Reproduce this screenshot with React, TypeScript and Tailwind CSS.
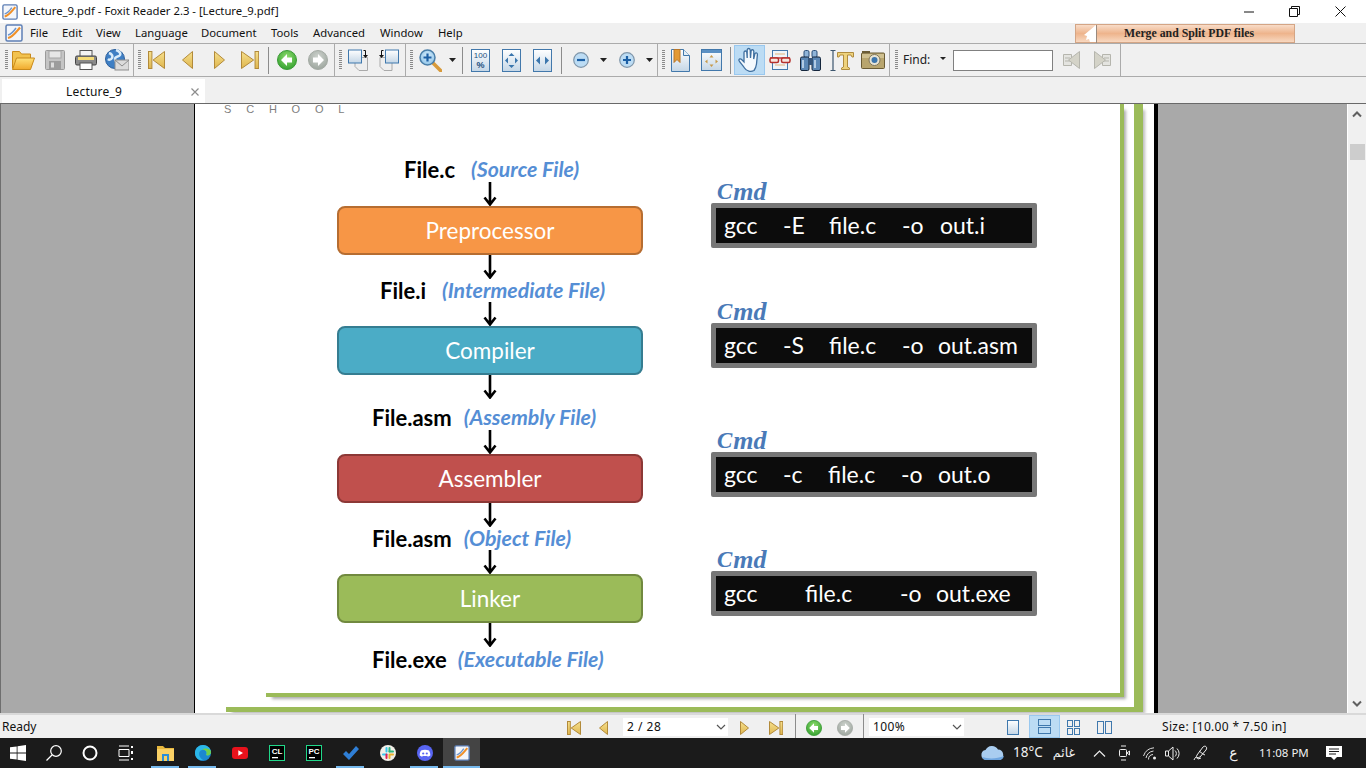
import React from "react";

const S = ({ w, h, c = "", children }: { w: number; h: number; c?: string; children?: React.ReactNode }) => (
  <svg width={w} height={h} viewBox={`0 0 ${w} ${h}`} className={`shrink-0 ${c}`}>{children}</svg>
);

const Defs = () => (
  <svg width="0" height="0" className="absolute">
    <defs>
      <linearGradient id="gold" x1="0" y1="0" x2="0" y2="1"><stop offset="0" stopColor="#f6e08e" /><stop offset="1" stopColor="#dfb64e" /></linearGradient>
      <linearGradient id="folder" x1="0" y1="0" x2="0" y2="1"><stop offset="0" stopColor="#ffe27a" /><stop offset="1" stopColor="#f0a92c" /></linearGradient>
      <linearGradient id="blueb" x1="0" y1="0" x2="0" y2="1"><stop offset="0" stopColor="#ffffff" /><stop offset="1" stopColor="#c4d6e6" /></linearGradient>
      <radialGradient id="green" cx="0.5" cy="0.35" r="0.7"><stop offset="0" stopColor="#8fdc6e" /><stop offset="1" stopColor="#2f9e2c" /></radialGradient>
      <radialGradient id="gray" cx="0.5" cy="0.35" r="0.7"><stop offset="0" stopColor="#cfd4cf" /><stop offset="1" stopColor="#9aa39b" /></radialGradient>
      <radialGradient id="lens" cx="0.5" cy="0.4" r="0.6"><stop offset="0" stopColor="#d8eefc" /><stop offset="1" stopColor="#8fc4e8" /></radialGradient>
    </defs>
  </svg>
);

const Grip = ({ c = "" }: { c?: string }) => (
  <div className={`w-[3px] h-[20px] shrink-0 bg-[repeating-linear-gradient(#8a8a8a_0_1px,transparent_1px_2px)] ${c}`} />
);
const Sep = ({ c = "" }: { c?: string }) => <div className={`w-px self-stretch shrink-0 bg-[#ababab] ${c}`} />;
const Thin = ({ c = "" }: { c?: string }) => <div className={`w-px h-[27px] shrink-0 bg-[#8c8c8c] ${c}`} />;
const Drop = ({ c = "" }: { c?: string }) => (
  <S w={7} h={4} c={c}><polygon points="0,0 7,0 3.5,4" fill="#222" /></S>
);

const Folder = ({ c = "" }: { c?: string }) => (
  <S w={23} h={20} c={c}>
    <path d="M0.500 18.500V1.500h7l2 2.500h9v4" fill="#f2c24e" stroke="#c98a1a" />
    <path d="M0.500 19.500L4.500 8h18l-4 11.500z" fill="url(#folder)" stroke="#c98a1a" />
  </S>
);
const Save = ({ c = "" }: { c?: string }) => (
  <S w={20} h={20} c={c}>
    <rect x="0.500" y="0.500" width="19" height="19" rx="1" fill="#c4c4c4" stroke="#9a9a9a" />
    <rect x="4" y="1" width="12" height="7" fill="#e6e6e6" stroke="#a4a4a4" />
    <rect x="4" y="11" width="12" height="8" fill="#9c9c9c" />
    <rect x="6" y="12.500" width="3" height="5" fill="#dcdcdc" />
  </S>
);
const Printer = ({ c = "" }: { c?: string }) => (
  <S w={22} h={20} c={c}>
    <rect x="5" y="0.500" width="12" height="6" fill="#f4f4f4" stroke="#555" />
    <rect x="0.500" y="6" width="21" height="9" rx="1.500" fill="#8a8a8a" stroke="#444" />
    <rect x="3" y="7" width="16" height="3" fill="#f6dc78" />
    <rect x="5" y="13" width="12" height="6.500" fill="#fff" stroke="#555" />
  </S>
);
const GlobeMail = ({ c = "" }: { c?: string }) => (
  <S w={24} h={22} c={c}>
    <circle cx="10" cy="10" r="9.500" fill="#3f7fc4" stroke="#2c5f9c" />
    <path d="M4 4c3 1 4 3 3 5s-3 2-4 1M11 1c3 1 5 3 4 5s-5 1-5 4 3 3 2 6" stroke="#d9ecfa" strokeWidth="2.500" fill="none" />
    <rect x="10" y="11" width="14" height="10" fill="#dcdcdc" stroke="#8d8d8d" />
    <path d="M10 11l7 6 7-6" fill="none" stroke="#8d8d8d" />
  </S>
);
const First = ({ w = 17, h = 18, c = "" }: { w?: number; h?: number; c?: string }) => (
  <S w={w} h={h} c={c}>
    <rect x="0.500" y="0.500" width={w * 0.2} height={h - 1} fill="url(#gold)" stroke="#b28a3a" />
    <polygon points={`${w - 0.5},0.5 ${w - 0.5},${h - 0.5} ${w * 0.3},${h / 2}`} fill="url(#gold)" stroke="#b28a3a" />
  </S>
);
const Last = ({ w = 18, h = 18, c = "" }: { w?: number; h?: number; c?: string }) => (
  <S w={w} h={h} c={c}>
    <polygon points={`0.5,0.5 0.5,${h - 0.5} ${w * 0.7},${h / 2}`} fill="url(#gold)" stroke="#b28a3a" />
    <rect x={w * 0.78} y="0.500" width={w * 0.2} height={h - 1} fill="url(#gold)" stroke="#b28a3a" />
  </S>
);
const Prev = ({ w = 11, h = 18, c = "" }: { w?: number; h?: number; c?: string }) => (
  <S w={w} h={h} c={c}><polygon points={`${w - 0.5},0.5 ${w - 0.5},${h - 0.5} 0.5,${h / 2}`} fill="url(#gold)" stroke="#b28a3a" /></S>
);
const Next = ({ w = 11, h = 18, c = "" }: { w?: number; h?: number; c?: string }) => (
  <S w={w} h={h} c={c}><polygon points={`0.5,0.5 0.5,${h - 0.5} ${w - 0.5},${h / 2}`} fill="url(#gold)" stroke="#b28a3a" /></S>
);
const RoundArrow = ({ s = 20, fill = "url(#green)", stroke = "#3a9a35", flip = false, c = "" }: { s?: number; fill?: string; stroke?: string; flip?: boolean; c?: string }) => (
  <svg width={s} height={s} viewBox="0 0 20 20" className={`shrink-0 ${c}`}>
    <circle cx="10" cy="10" r="9.500" fill={fill} stroke={stroke} />
    <path d={flip ? "M16 10l-6-6v3.500H5v5h5V16z" : "M4 10l6-6v3.500h5v5h-5V16z"} fill="#fff" />
  </svg>
);
const DocA = ({ c = "" }: { c?: string }) => (
  <S w={20} h={22} c={c}>
    <path d="M7 8.500h12.500v13H11l-4-4z" fill="#eee" stroke="#aaa" />
    <rect x="0.500" y="1" width="13" height="13" fill="url(#blueb)" stroke="#3f78ad" />
    <path d="M15.500 1.500h2v5" stroke="#111" fill="none" />
    <polygon points="15,6 20,6 17.5,9" fill="#111" />
  </S>
);
const DocB = ({ c = "" }: { c?: string }) => (
  <S w={20} h={22} c={c}>
    <path d="M1 8.500h12v13H5l-4-4z" fill="#eee" stroke="#aaa" />
    <rect x="6.500" y="1" width="13" height="13" fill="url(#blueb)" stroke="#3f78ad" />
    <path d="M4.500 1.500h-2v5" stroke="#111" fill="none" />
    <polygon points="0,6 5,6 2.5,9" fill="#111" />
  </S>
);
const ZoomIcon = ({ c = "" }: { c?: string }) => (
  <S w={23} h={23} c={c}>
    <path d="M13 13l9 9" stroke="#d89a3a" strokeWidth="3.500" strokeLinecap="round" />
    <circle cx="8.500" cy="8.500" r="7.500" fill="url(#lens)" stroke="#4a7ea8" strokeWidth="1.500" />
    <path d="M8.500 4.500v8M4.500 8.500h8" stroke="#1c5fa5" strokeWidth="2.200" />
  </S>
);
const Box = ({ c = "", children }: { c?: string; children?: React.ReactNode }) => (
  <S w={19} h={23} c={c}>
    <rect x="0.500" y="0.500" width="18" height="22" fill="url(#blueb)" stroke="#4278ab" />
    {children}
  </S>
);
const PM = ({ plus = false, c = "" }: { plus?: boolean; c?: string }) => (
  <S w={16} h={16} c={c}>
    <circle cx="8" cy="8" r="7.300" fill="#bcdcf4" stroke="#7f96aa" strokeWidth="1.200" />
    <path d={plus ? "M4 8h8M8 4v8" : "M4 8h8"} stroke="#1c5fa5" strokeWidth="2.200" />
  </S>
);
const Bookmark = ({ c = "" }: { c?: string }) => (
  <S w={19} h={23} c={c}>
    <path d="M0.500 0.500h12l6 6v16h-18z" fill="url(#blueb)" stroke="#4278ab" />
    <path d="M12.500 0.500v6h6" fill="#e4eef6" stroke="#4278ab" />
    <path d="M3 0.500h6v13l-3-3-3 3z" fill="#e39a35" stroke="#b8772a" />
  </S>
);
const PageFit = ({ c = "" }: { c?: string }) => (
  <S w={21} h={22} c={c}>
    <rect x="0.500" y="0.500" width="20" height="21" fill="url(#blueb)" stroke="#4278ab" />
    <rect x="1" y="1" width="19" height="3" fill="#5a90c4" />
    <path d="M10.500 6l2 2.500h-4zM10.500 18l2-2.500h-4zM4 12.500l2.500-2v4zM17 12.500l-2.500-2v4z" fill="#c79a4a" />
  </S>
);
const Hand = () => (
  <svg width="24" height="26" viewBox="0 0 24 26">
    <path d="M6.500 21C4.500 18 1.500 15 1 13.500c-.4-1.500 1.400-2.300 2.600-1L6 15V5.500c0-2 2.600-2 2.800 0L9.200 11V3c0-2 2.800-2 3 0l.3 8 .6-7c.2-1.800 2.700-1.600 2.700.3L15.700 12l1.100-5c.5-1.800 2.800-1.300 2.600.6L18.500 17c-.4 3-1 4.500-2.500 6.500-3 1.500-7.500 1-9.500-2.500z" fill="#f4f9fd" stroke="#3f6f9f" strokeWidth="1.300" />
  </svg>
);
const Glasses = ({ c = "" }: { c?: string }) => (
  <S w={22} h={20} c={c}>
    <rect x="3.500" y="0.500" width="15" height="19" fill="#eef4f9" stroke="#4278ab" />
    <path d="M6 4h10M6 15h10" stroke="#e7c9a5" strokeWidth="1.500" />
    <path d="M1 8h20" stroke="#b33" strokeWidth="1.500" />
    <rect x="1" y="8" width="8.500" height="4.500" rx="1.500" fill="#f6e6df" stroke="#b5302c" strokeWidth="1.500" />
    <rect x="12.500" y="8" width="8.500" height="4.500" rx="1.500" fill="#f6e6df" stroke="#b5302c" strokeWidth="1.500" />
  </S>
);
const Binoc = ({ c = "" }: { c?: string }) => (
  <S w={21} h={21} c={c}>
    <rect x="4" y="0.500" width="5" height="7" rx="1.500" fill="#8fb4d8" stroke="#2b4f78" />
    <rect x="12" y="0.500" width="5" height="7" rx="1.500" fill="#8fb4d8" stroke="#2b4f78" />
    <rect x="0.500" y="7" width="8.500" height="13.500" rx="1.500" fill="#5b87b5" stroke="#15263c" />
    <rect x="12" y="7" width="8.500" height="13.500" rx="1.500" fill="#5b87b5" stroke="#15263c" />
    <rect x="8.500" y="8" width="4" height="7" fill="#35567d" />
    <path d="M3 10v8M15 10v8" stroke="#cfe2f3" strokeWidth="1.500" />
  </S>
);
const TextTool = ({ c = "" }: { c?: string }) => (
  <S w={24} h={21} c={c}>
    <path d="M0.500 0.500h2.500M5.500 0.500H3v20h2.500M.5 20.500H3" fill="none" stroke="#3d566e" strokeWidth="1.200" />
    <path d="M7.500 2.500h16v4.500h-1.500l-1-2h-3.500v12l2 1v1.500h-8V18l2-1V5h-3.500l-1 2H7.500z" fill="#eed27d" stroke="#b08c3e" />
  </S>
);
const Camera = ({ c = "" }: { c?: string }) => (
  <S w={24} h={18} c={c}>
    <rect x="1" y="0" width="8" height="3" fill="#6a5c36" />
    <rect x="0.500" y="2" width="23" height="15.500" rx="1" fill="#b8a56e" stroke="#6a5c36" />
    <rect x="1" y="3" width="22" height="4" fill="#cfc090" />
    <circle cx="13.500" cy="9" r="5.500" fill="#e8e4d4" stroke="#80765a" />
    <circle cx="13.500" cy="9" r="3" fill="#3d76ad" />
  </S>
);
const FindNav = ({ flip = false, c = "" }: { flip?: boolean; c?: string }) => (
  <S w={17} h={18} c={c}>
    <g transform={flip ? "translate(17 0) scale(-1 1)" : ""}>
      <path d="M0.500 3.500h8v11h-8z" fill="#e4e4e0" stroke="#b5b5ad" />
      <path d="M2 7h5M2 10h5" stroke="#b5b5ad" />
      <polygon points="16.5,0.5 16.5,17.5 5.5,9" fill="#d4d3c8" stroke="#b5b5ad" />
    </g>
  </S>
);
const ViewIcon = ({ kind, c = "" }: { kind: string; c?: string }) => {
  const st = { fill: "none", stroke: "#3f78ad", strokeWidth: 1 };
  if (kind === "one") return <S w={12} h={15} c={c}><rect x="0.500" y="0.500" width="11" height="14" fill="url(#blueb)" stroke="#3f78ad" /></S>;
  if (kind === "two") return <S w={13} h={15} c={c}><rect x="0.500" y="0.500" width="12" height="6" {...st} /><rect x="0.500" y="8.500" width="12" height="6" {...st} /></S>;
  if (kind === "grid") return <S w={13} h={15} c={c}><rect x="0.500" y="0.500" width="5" height="6" {...st} /><rect x="7.500" y="0.500" width="5" height="6" {...st} /><rect x="0.500" y="8.500" width="5" height="6" {...st} /><rect x="7.500" y="8.500" width="5" height="6" {...st} /></S>;
  return <S w={15} h={13} c={c}><rect x="0.500" y="0.500" width="6" height="12" {...st} /><rect x="8.500" y="0.500" width="6" height="12" {...st} /></S>;
};
const FoxitLogo = ({ s = 18, c = "" }: { s?: number; c?: string }) => (
  <svg width={s} height={s} viewBox="0 0 18 18" className={`shrink-0 ${c}`}>
    <rect x="1" y="1" width="16" height="16" rx="1.500" fill="#f4f6fa" stroke="#5d7fb5" strokeWidth="1.500" />
    <path d="M3 14C8 13 11 8 15 3.500" stroke="#f09028" strokeWidth="2.200" fill="none" />
    <path d="M3 11C7 10 9 7 11 4" stroke="#6d95cc" strokeWidth="1.500" fill="none" />
  </svg>
);

const Arrow = () => (
  <div className="h-[24px] flex justify-center">
    <svg width="14" height="24" viewBox="0 0 14 24">
      <path d="M7 0v23M1.500 15.500L7 22.500l5.500-7" fill="none" stroke="#000" strokeWidth="2.600" />
    </svg>
  </div>
);

const Label = ({ a, b, pad, gap, h = "h-[24px]" }: { a: string; b: string; pad: string; gap: string; h?: string }) => (
  <div className={`flex items-center whitespace-nowrap ${pad} ${h}`}>
    <span className="text-[22px] font-bold text-black leading-none">{a}</span>
    <span className={`text-[21.300px] font-bold italic text-[#558ed5] leading-none ${gap}`}>{b}</span>
  </div>
);

const Stage = ({ text, c }: { text: string; c: string }) => (
  <div className={`h-[49px] rounded-[8px] border-2 flex items-center justify-center text-white text-[22.500px] ${c}`}>{text}</div>
);

const Cmd = ({ c = "", box = "h-[45px]", tokens }: { c?: string; box?: string; tokens: [string, string][] }) => (
  <div className={c}>
    <div className="h-[22px] flex items-end pl-[6px] font-['Liberation_Serif',serif] italic font-bold text-[#4a7ab8] leading-[22px] whitespace-nowrap">
      <span className="text-[23px] tracking-[1px]">C</span><span className="text-[26px]">md</span>
    </div>
    <div className={`${box} border-[5px] border-[#777777] rounded-[2px] bg-[#0c0c0c] flex items-center pl-[8px] text-white text-[23px] leading-none whitespace-nowrap`}>
      {tokens.map(([t, w], i) => <span key={i} className={`shrink-0 ${w}`}>{t}</span>)}
    </div>
  </div>
);

const TB = ({ c = "", children }: { c?: string; children?: React.ReactNode }) => (
  <div className={`w-[37px] h-[30px] flex items-center justify-center relative shrink-0 ${c}`}>{children}</div>
);
const UL = () => <div className="absolute bottom-0 h-[2px] bg-[#76b9ed] left-[4px] right-[5px]" />;

export default function App() {
  return (
    <div className="w-[1366px] h-[768px] overflow-hidden flex flex-col font-['Noto_Sans',sans-serif] text-[12px] text-[#111] bg-[#f0f0f0]">
      <Defs />
      {/* Title bar */}
      <div className="h-[23px] bg-white flex items-center shrink-0">
        <FoxitLogo s={16} c="ml-[2px]" />
        <span className="ml-[5px] whitespace-nowrap text-[11.300px]">Lecture_9.pdf - Foxit Reader 2.3 - [Lecture_9.pdf]</span>
        <svg width="10" height="10" viewBox="0 0 10 10" className="ml-auto"><path d="M0 5h10" stroke="#111" /></svg>
        <svg width="11" height="11" viewBox="0 0 11 11" className="ml-[35px]"><path d="M.5 2.500h8v8h-8zM2.500 2.500v-2h8v8h-2" fill="none" stroke="#111" /></svg>
        <svg width="11" height="11" viewBox="0 0 11 11" className="ml-[35px] mr-[20px]"><path d="M.5.500l10 10M10.500.500l-10 10" stroke="#111" /></svg>
      </div>
      {/* Menu */}
      <div className="h-[20px] flex items-center shrink-0 relative text-[11.300px]">
        <FoxitLogo s={18} c="ml-[5px]" />
        <span className="ml-[7px] w-[32px]">File</span>
        <span className="w-[34px]">Edit</span>
        <span className="w-[39px]">View</span>
        <span className="w-[66px]">Language</span>
        <span className="w-[70px]">Document</span>
        <span className="w-[42px]">Tools</span>
        <span className="w-[67px]">Advanced</span>
        <span className="w-[58px]">Window</span>
        <span className="w-[637px]">Help</span>
        <div className="w-[220px] h-[19px] border border-[#d4a585] bg-[linear-gradient(#f8dcc8,#eeb48c_50%,#f8d8c0)] flex items-center justify-center relative font-['Liberation_Serif',serif] font-bold text-[11.800px] text-[#222] pt-px">
          <svg width="14" height="19" viewBox="0 0 14 19" className="absolute left-[7px] top-0"><path d="M13 0v17H7l-1-3-3 1 1-4-3-1z" fill="#fff" /><path d="M13.500 0v18" stroke="#9a8a7e" /></svg>
          <span className="ml-[8px]">Merge and Split PDF files</span>
        </div>
      </div>
      {/* Toolbar */}
      <div className="h-[34px] border-y border-[#ababab] flex items-center shrink-0">
        <Grip c="ml-[5px]" />
        <Folder c="ml-[4px]" />
        <Save c="ml-[10px]" />
        <Printer c="ml-[10px]" />
        <GlobeMail c="ml-[8px]" />
        <Sep c="ml-[4px]" />
        <Grip c="ml-[4px]" />
        <First c="ml-[7px]" />
        <Prev c="ml-[17px]" />
        <Next c="ml-[21px]" />
        <Last c="ml-[16px]" />
        <Thin c="ml-[9px]" />
        <RoundArrow c="ml-[8px]" />
        <RoundArrow c="ml-[11px]" fill="url(#gray)" stroke="#a4aaa4" flip />
        <Sep c="ml-[6px]" />
        <Grip c="ml-[4px]" />
        <DocA c="ml-[6px]" />
        <DocB c="ml-[11px]" />
        <Sep c="ml-[6px]" />
        <Grip c="ml-[4px]" />
        <ZoomIcon c="ml-[6px]" />
        <Drop c="ml-[7px]" />
        <Thin c="ml-[6px]" />
        <Box c="ml-[8px]">
          <text x="9.500" y="9" textAnchor="middle" fontSize="8" fill="#1d4f80" fontFamily="Liberation Sans">100</text>
          <text x="9.500" y="19" textAnchor="middle" fontSize="9" fontWeight="bold" fill="#1d4f80" fontFamily="Liberation Sans">%</text>
        </Box>
        <Box c="ml-[12px]"><path d="M9.500 4l3 3h-6zM9.500 19l3-3h-6zM3 11.500l3-3v6zM16 11.500l-3-3v6z" fill="#3b76ad" /></Box>
        <Box c="ml-[12px]"><path d="M3 11.500l4-4v8zM16 11.500l-4-4v8z" fill="#3b76ad" /></Box>
        <Thin c="ml-[9px]" />
        <PM c="ml-[11px]" />
        <Drop c="ml-[11px]" />
        <PM plus c="ml-[12px]" />
        <Drop c="ml-[11px]" />
        <Sep c="ml-[4px]" />
        <Grip c="ml-[4px]" />
        <Bookmark c="ml-[6px]" />
        <PageFit c="ml-[11px]" />
        <Thin c="ml-[8px]" />
        <div className="ml-[3px] w-[31px] h-[30px] bg-[#bcdcf4] border border-[#99c8ef] flex items-center justify-center shrink-0"><Hand /></div>
        <Glasses c="ml-[4px]" />
        <Binoc c="ml-[9px]" />
        <TextTool c="ml-[9px]" />
        <Camera c="ml-[7px]" />
        <Sep c="ml-[4px]" />
        <Grip c="ml-[5px]" />
        <span className="ml-[5px] w-[27px] text-[#222]">Find:</span>
        <S w={6} h={3} c="ml-[10px] -mt-[3px]"><polygon points="0,0 6,0 3,3" fill="#222" /></S>
        <div className="ml-[7px] w-[100px] h-[21px] bg-white border border-[#808080] shrink-0" />
        <FindNav c="ml-[10px]" />
        <FindNav flip c="ml-[14px]" />
        <Sep c="ml-[9px]" />
      </div>
      {/* Tabs */}
      <div className="h-[27px] border-b border-[#696969] flex items-end shrink-0">
        <div className="ml-[2px] w-[203px] h-[24px] bg-white flex items-center relative">
          <span className="ml-[64px] tracking-[0.2px] mt-[2px]">Lecture_9</span>
          <svg width="8" height="8" viewBox="0 0 8 8" className="ml-auto mr-[6px] mt-[2px]"><path d="M.5.500l7 7M7.500.500l-7 7" stroke="#8c8c8c" strokeWidth="1.200" /></svg>
        </div>
      </div>
      {/* Document area */}
      <div className="flex-1 min-h-0 flex">
        <div className="w-[195px] bg-[#a9a9a9] border-l border-l-[#6e6e6e] border-r border-r-black shrink-0" />
        <div className="w-[963px] bg-white border-r-[4px] border-black flex flex-col overflow-hidden pl-[31px] pr-[11px] pb-px shrink-0">
          <div className="flex-1 min-h-0 border-r-[9px] border-b-[5px] border-[#9bbb59] pl-[40px] pr-[10px] pb-[10px] shadow-[4px_4px_3px_-2px_#bbbbbb] flex">
            <div className="flex-1 border-r-4 border-b-4 border-[#9bbb59] shadow-[4px_4px_3px_-2px_#aaaaaa] font-['Lato',sans-serif]">
              <div className="-ml-[42px] h-[11px] mt-[-1px] text-[11px] leading-[11px] tracking-[14.800px] text-[#808080] font-['Liberation_Sans',sans-serif] whitespace-nowrap pt-px">SCHOOL</div>
              <div className="flex mt-[44px] ml-[71px]">
                <div className="w-[306px] shrink-0 flex flex-col">
                  <Label a="File.c" b="(Source File)" pad="pl-[67px]" gap="ml-[16px]" />
                  <Arrow />
                  <Stage text="Preprocessor" c="bg-[#f79646] border-[#b66d31]" />
                  <Arrow />
                  <Label a="File.i" b="(Intermediate File)" pad="pl-[43px]" gap="ml-[16px]" h="h-[23px]" />
                  <Arrow />
                  <Stage text="Compiler" c="bg-[#4bacc6] border-[#357d91]" />
                  <Arrow />
                  <div className="h-[7px]" />
                  <Label a="File.asm" b="(Assembly File)" pad="pl-[35px]" gap="ml-[12px]" />
                  <Arrow />
                  <Stage text="Assembler" c="bg-[#c0504d] border-[#8c3836]" />
                  <Arrow />
                  <Label a="File.asm" b="(Object File)" pad="pl-[35px]" gap="ml-[12px]" h="h-[23px]" />
                  <Arrow />
                  <Stage text="Linker" c="bg-[#9bbb59] border-[#71893f]" />
                  <Arrow />
                  <Label a="File.exe" b="(Executable File)" pad="pl-[35px] mt-px" gap="ml-[11px]" />
                </div>
                <div className="w-[326px] ml-[68px] shrink-0 pt-[23px]">
                  <Cmd tokens={[["gcc", "w-[59px]"], ["-E", "w-[46px]"], ["file.c", "w-[73px]"], ["-o", "w-[38px]"], ["out.i", ""]]} />
                  <Cmd c="mt-[53px]" tokens={[["gcc", "w-[59px]"], ["-S", "w-[46px]"], ["file.c", "w-[73px]"], ["-o", "w-[36px]"], ["out.asm", ""]]} />
                  <Cmd c="mt-[62px]" tokens={[["gcc", "w-[59px]"], ["-c", "w-[45px]"], ["file.c", "w-[73px]"], ["-o", "w-[37px]"], ["out.o", ""]]} />
                  <Cmd c="mt-[52px]" tokens={[["gcc", "w-[81px]"], ["file.c", "w-[95px]"], ["-o", "w-[36px]"], ["out.exe", ""]]} />
                </div>
              </div>
            </div>
          </div>
        </div>
        <div className="flex-1 bg-[#a9a9a9]" />
        <div className="w-[19px] shrink-0 bg-[#f0f0f0] border-l border-white flex flex-col items-center relative">
          <svg width="10" height="7" viewBox="0 0 10 7" className="mt-[7px]"><path d="M1 5.500l4-4 4 4" fill="none" stroke="#606060" strokeWidth="2" /></svg>
          <div className="w-[15px] h-[16px] bg-[#cdcdcd] mt-[26px]" />
          <div className="flex-1" />
          <svg width="10" height="7" viewBox="0 0 10 7" className="mb-[6px]"><path d="M1 1.500l4 4 4-4" fill="none" stroke="#606060" strokeWidth="2" /></svg>
        </div>
      </div>
      {/* Status bar */}
      <div className="h-[25px] border-t-2 border-[#d9d9d9] pt-px flex items-center shrink-0">
        <div className="w-[567px] pl-[2px] shrink-0">Ready</div>
        <First w={14} h={14} c="mt-[2px]" />
        <Prev w={9} h={14} c="ml-[18px] mt-[2px]" />
        <div className="ml-[15px] w-[105px] h-[18px] bg-white flex items-center justify-between pl-[4px] pr-[2px] shrink-0">
          <span className="tracking-[0.5px]">2 / 28</span>
          <svg width="10" height="6" viewBox="0 0 10 6"><path d="M1 1l4 4 4-4" fill="none" stroke="#555" strokeWidth="1.200" /></svg>
        </div>
        <Next w={9} h={14} c="ml-[12px] mt-[2px]" />
        <Last w={14} h={14} c="ml-[20px] mt-[2px]" />
        <Thin c="ml-[12px] h-[23px]" />
        <RoundArrow s={16} c="ml-[10px] mt-[2px]" />
        <RoundArrow s={16} c="ml-[15px] mt-[2px]" fill="url(#gray)" stroke="#a4aaa4" flip />
        <Thin c="ml-[10px] h-[23px]" />
        <div className="ml-[5px] w-[95px] h-[18px] bg-white flex items-center justify-between pl-[4px] pr-[2px] shrink-0">
          <span className="tracking-[0.4px]">100%</span>
          <svg width="10" height="6" viewBox="0 0 10 6"><path d="M1 1l4 4 4-4" fill="none" stroke="#555" strokeWidth="1.200" /></svg>
        </div>
        <ViewIcon kind="one" c="ml-[43px]" />
        <div className="ml-[10px] w-[31px] self-stretch -mt-px bg-[#bcdcf4] border border-[#99c8ef] flex items-center justify-center shrink-0"><ViewIcon kind="two" /></div>
        <ViewIcon kind="grid" c="ml-[7px]" />
        <ViewIcon kind="split" c="ml-[17px]" />
        <span className="ml-[50px] whitespace-nowrap tracking-[0.33px]">Size: [10.00 * 7.50 in]</span>
      </div>
      {/* Taskbar */}
      <div className="h-[30px] bg-[#1b1b1b] flex items-center shrink-0 text-[#f0f0f0]">
        <svg width="16" height="16" viewBox="0 0 16 16" className="ml-[10px]"><path d="M0 2.300l6.700-.9v6.200H0zM7.500 1.300L16 0v7.600H7.500zM0 8.400h6.700v6.200L0 13.700zM7.500 8.400H16V16l-8.500-1.200z" fill="#fff" /></svg>
        <svg width="16" height="16" viewBox="0 0 16 16" className="ml-[20px]"><circle cx="10" cy="6" r="5.300" fill="none" stroke="#fff" strokeWidth="1.200" /><path d="M6 10l-5.500 5.500" stroke="#fff" strokeWidth="1.300" /></svg>
        <svg width="16" height="16" viewBox="0 0 16 16" className="ml-[20px]"><circle cx="8" cy="8" r="6.500" fill="none" stroke="#fff" strokeWidth="2" /></svg>
        <svg width="16" height="16" viewBox="0 0 16 16" className="ml-[20px]"><path d="M1 1h10M1 15h10M1 4.500h10v7H1z" fill="none" stroke="#fff" /><path d="M14 1v2M14 6v3M14 13v2" stroke="#fff" strokeWidth="2" /></svg>
        <TB c="ml-[13px]">
          <svg width="17" height="16" viewBox="0 0 17 16"><path d="M0 1h6l2 2h9v2H0z" fill="#e8b83e" /><rect x="0" y="4" width="17" height="12" fill="#fad165" /><rect x="5" y="9" width="7" height="7" fill="#2b8fd8" /><rect x="7" y="11" width="3" height="5" fill="#fad165" /></svg>
          <UL />
        </TB>
        <TB>
          <svg width="16" height="16" viewBox="0 0 16 16"><circle cx="8" cy="8" r="8" fill="#1b88d0" /><path d="M0 8C0 3 4 0 8 0c5 0 8 4 8 7 0 3-3 4-5 3 2-3-1-6-4-5C3 6 3 12 8 15 3 16 0 12 0 8z" fill="#2bb7e8" /><path d="M16 7c0 3-3 4-5 3 2-3-1-6-4-5 3-3 9-1 9 2z" fill="#6ed04b" /></svg>
          <UL />
        </TB>
        <TB>
          <svg width="16" height="12" viewBox="0 0 16 12"><rect width="16" height="12" rx="3" fill="#e8121c" /><path d="M6.300 3.300v5.400L11 6z" fill="#fff" /></svg>
        </TB>
        <TB>
          <svg width="16" height="16" viewBox="0 0 16 16"><rect x=".5" y=".5" width="15" height="15" fill="#000" stroke="#21d789" /><rect x="3" y="12" width="6" height="1.300" fill="#fff" /><text x="8" y="9" textAnchor="middle" fontSize="8" fontWeight="bold" fill="#fff" fontFamily="Liberation Sans">CL</text></svg>
        </TB>
        <TB>
          <svg width="16" height="16" viewBox="0 0 16 16"><rect x=".5" y=".5" width="15" height="15" fill="#000" stroke="#21d789" /><rect x="3" y="12" width="6" height="1.300" fill="#fff" /><text x="8" y="9" textAnchor="middle" fontSize="8" fontWeight="bold" fill="#fff" fontFamily="Liberation Sans">PC</text></svg>
        </TB>
        <TB>
          <svg width="16" height="14" viewBox="0 0 16 14"><path d="M0 8l3-3 3 3 7-8 3 3-10 11z" fill="#2f7fd6" /></svg>
          <UL />
        </TB>
        <TB>
          <svg width="16" height="16" viewBox="0 0 16 16"><circle cx="8" cy="8" r="8" fill="#f1efe8" /><path d="M6.500 3v3.500M3 9.500h3.500" stroke="#36c5f0" strokeWidth="2" strokeLinecap="round" /><path d="M9.500 3v3.500" stroke="#2eb67d" strokeWidth="2" strokeLinecap="round" /><path d="M13 6.500H9.500" stroke="#2eb67d" strokeWidth="2" strokeLinecap="round" /><path d="M6.500 13V9.500" stroke="#e01e5a" strokeWidth="2" strokeLinecap="round" /><path d="M9.500 9.500H13M9.500 9.500V13" stroke="#ecb22e" strokeWidth="2" strokeLinecap="round" /></svg>
        </TB>
        <TB>
          <svg width="16" height="16" viewBox="0 0 16 16"><circle cx="8" cy="8" r="8" fill="#5865f2" /><path d="M4 5.500c2.500-1 5.500-1 8 0 1 1.800 1.400 3.500 1.300 5-1 .7-1.800 1-2.500 1.200l-.6-1c-1.400.4-2.900.4-4.400 0l-.6 1c-.7-.2-1.500-.5-2.500-1.200-.1-1.500.3-3.200 1.300-5z" fill="#fff" /><circle cx="6.200" cy="8.500" r="1.100" fill="#5865f2" /><circle cx="9.800" cy="8.500" r="1.100" fill="#5865f2" /></svg>
          <UL />
        </TB>
        <TB c="bg-[#444444]">
          <FoxitLogo s={16} />
          <div className="absolute bottom-0 inset-x-0 h-[2px] bg-[#76b9ed]" />
        </TB>
        <svg width="24" height="16" viewBox="0 0 24 16" className="ml-[501px]"><path d="M5 15a5 5 0 0 1-.5-9.900A7 7 0 0 1 17 4.500a5.500 5.500 0 0 1 2 10.500z" fill="#a9cdf0" /><path d="M1 12c6 2 15 2 22-1-1 3-3 4-5 4H5c-2 0-3-1-4-3z" fill="#6fa6e0" /></svg>
        <span className="ml-[8px] w-[37px] text-[13.500px] whitespace-nowrap leading-none">18°C</span>
        <span className="w-[25px] text-[12.500px] font-['DejaVu_Sans',sans-serif] whitespace-nowrap leading-none" dir="rtl">غائم</span>
        <svg width="13" height="7" viewBox="0 0 13 7" className="ml-[18px]"><path d="M1 6.500l5.500-5.500 5.500 5.500" fill="none" stroke="#eee" strokeWidth="1.200" /></svg>
        <svg width="11" height="16" viewBox="0 0 11 16" className="ml-[13px]"><path d="M2 1h5M2 15h5" stroke="#eee" /><rect x=".5" y="4.500" width="7" height="7" rx="1" fill="none" stroke="#eee" /><path d="M8 8l2.500-2v4z" fill="none" stroke="#eee" /></svg>
        <svg width="14" height="13" viewBox="0 0 14 13" className="ml-[13px]"><path d="M.5 9A12 12 0 0 1 11 .8M3 11A9 9 0 0 1 10.500 4M5.500 12.500A5 5 0 0 1 10 7.500" fill="none" stroke="#ddd" /><circle cx="11.500" cy="11" r="1.500" fill="#eee" /></svg>
        <svg width="16" height="15" viewBox="0 0 16 15" className="ml-[8px]"><path d="M.5 5v5h3L8 14V1L3.500 5zM3.500 5v5" fill="none" stroke="#eee" /><path d="M10 4.500a4 4 0 0 1 0 6M12 2.500a7 7 0 0 1 0 10" fill="none" stroke="#eee" /></svg>
        <svg width="16" height="16" viewBox="0 0 16 16" className="ml-[12px]"><path d="M1 15c1-3 3-3 3-5l6-8c2-2 5 0 3 3l-6 7c-2 1-3 0-4 1M6 6l4 3M4 12l1 2 3-1M10 9l2 1" fill="none" stroke="#eee" /></svg>
        <span className="ml-[12px] w-[25px] text-[14px] font-['DejaVu_Sans',sans-serif] leading-none text-center">ع</span>
        <span className="ml-[13px] w-[67px] text-[11.500px] whitespace-nowrap leading-none">11:08 PM</span>
        <svg width="16" height="16" viewBox="0 0 16 16"><path d="M0 1h16v11h-5l-3 3-3-3H0z" fill="#fff" /><path d="M3 4h10M3 6.500h10M3 9h7" stroke="#1b1b1b" /></svg>
      </div>
    </div>
  );
}
